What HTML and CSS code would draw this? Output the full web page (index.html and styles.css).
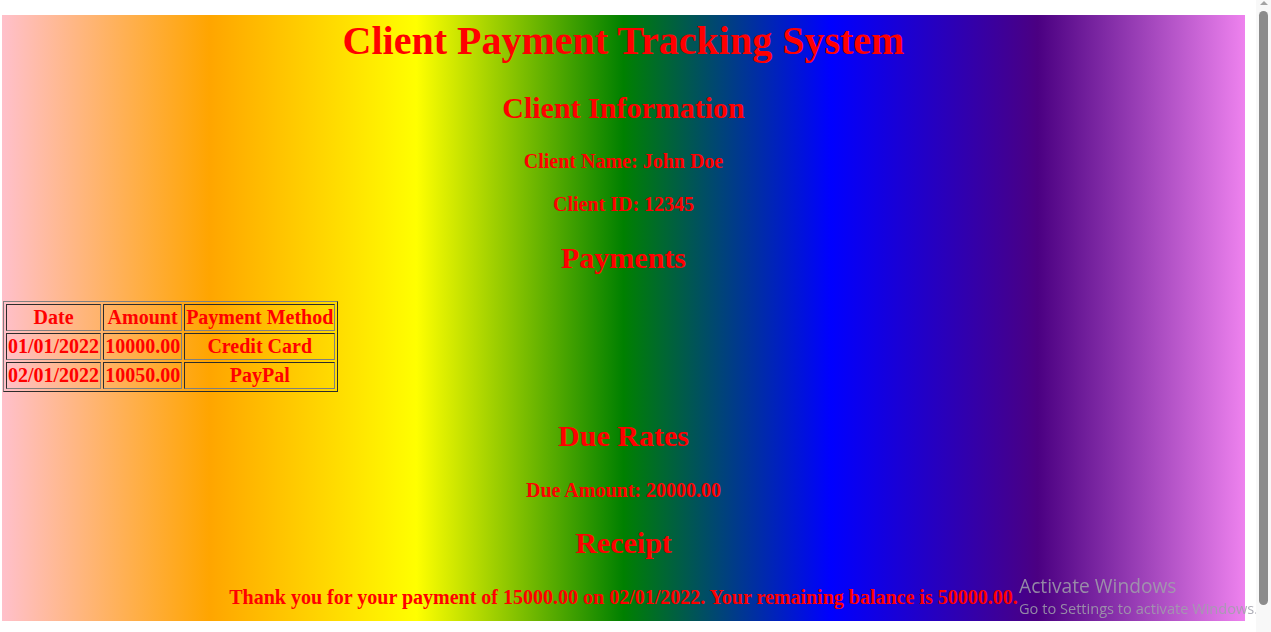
FILE: index.html
```html
<!DOCTYPE html>
<html lang="en">
<head>
<meta charset="utf-8">
<title>Client Payment Tracking System</title>
<link rel="stylesheet" href="styles.css">
</head>
<body>
<div class="page">
  <h1 class="title">Client Payment Tracking System</h1>
  <h2 class="section">Client Information</h2>
  <p class="line">Client Name: John Doe</p>
  <p class="line">Client ID: 12345</p>
  <h2 class="section pay">Payments</h2>
  <table class="payments">
    <tr><th>Date</th><th>Amount</th><th>Payment Method</th></tr>
    <tr><td>01/01/2022</td><td>10000.00</td><td>Credit Card</td></tr>
    <tr><td>02/01/2022</td><td>10050.00</td><td>PayPal</td></tr>
  </table>
  <h2 class="section due">Due Rates</h2>
  <p class="line">Due Amount: 20000.00</p>
  <h2 class="section">Receipt</h2>
  <p class="line last">Thank you for your payment of 15000.00 on 02/01/2022. Your remaining balance is 50000.00.</p>
</div>
<div class="watermark">
  <div class="wm-title">Activate Windows</div>
  <div class="wm-sub">Go to Settings to activate Windows.</div>
</div>
<div class="scrollbar">
  <div class="sb-arrow"></div>
  <div class="sb-thumb"></div>
</div>
</body>
</html>
```
FILE: styles.css
```css
html {
  background: #fff;
}
body {
  margin: 0;
  padding: 15px 0 29px 2px;
  font-family: "Liberation Serif", "Times New Roman", serif;
}
.page {
  width: 1243px;
  display: flow-root;
  padding-top: 2px;
  background: linear-gradient(to right, pink, orange, yellow, green, blue, indigo, violet);
  color: red;
  font-size: 20px;
  font-weight: bold;
  text-align: center;
}
.title {
  font-size: 40px;
  margin: 0 0 26.8px;
}
.section {
  font-size: 30px;
  margin: 24.9px 0;
}
.section.pay {
  margin-bottom: 26px;
}
.section.due {
  margin-top: 27px;
  margin-bottom: 26px;
}
.line {
  margin: 20px 0;
}
.line.last {
  margin-top: 26px;
  margin-bottom: 12px;
}
.payments {
  margin-left: 1px;
  border: 1px outset gray;
  border-spacing: 2px;
  font-size: 20px;
}
.payments th,
.payments td {
  border: 1px inset gray;
  padding: 1px;
  text-align: center;
  font-weight: bold;
}
.watermark {
  position: fixed;
  left: 1019px;
  top: 573px;
  color: rgba(160, 160, 170, 0.85);
  font-family: "Open Sans", "Noto Sans", sans-serif;
  pointer-events: none;
}
.wm-title {
  font-size: 19.2px;
  line-height: 25px;
}
.wm-sub {
  font-size: 14.6px;
  line-height: 20px;
}
.scrollbar {
  position: fixed;
  right: 0;
  top: 0;
  width: 15px;
  height: 632px;
  background: #f8f8f8;
}
.sb-arrow {
  margin: 1px auto 0;
  width: 0;
  height: 0;
  border-left: 4px solid transparent;
  border-right: 4px solid transparent;
  border-bottom: 4px solid #a3a3a3;
}
.sb-thumb {
  margin: 6px auto 0;
  width: 9px;
  height: 594px;
  border-radius: 5px;
  background: #8c8c8c;
}
```
